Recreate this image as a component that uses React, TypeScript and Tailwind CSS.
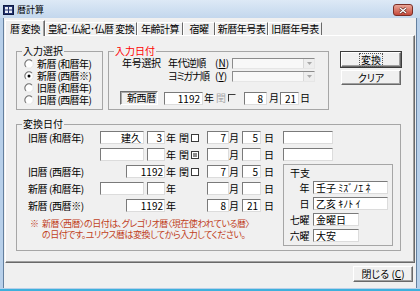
import React from "react";

type Props = { className?: string; children?: React.ReactNode };

function Field({ className = "", children }: Props) {
  return (
    <div
      className={`h-[13px] shrink-0 overflow-hidden whitespace-nowrap bg-white border border-t-[#7a7a7a] border-l-[#7a7a7a] border-r-[#dcdcdc] border-b-[#dcdcdc] leading-[11px] ${className}`}
    >
      {children}
    </div>
  );
}

function Ch({ className = "", children }: Props) {
  return <span className={`w-[10px] shrink-0 text-center leading-[12px] ${className}`}>{children}</span>;
}

function Check({ className = "", mixed = false }: { className?: string; mixed?: boolean }) {
  return (
    <div className={`w-[8px] h-[8px] shrink-0 border border-[#3a3a3a] bg-white p-[1px] ${className}`}>
      {mixed && <div className="w-full h-full bg-[#8c8c8c]" />}
    </div>
  );
}

function Radio({ on = false }: { on?: boolean }) {
  return (
    <svg width="10" height="10" viewBox="0 0 12 12" className="shrink-0">
      <circle cx="6" cy="6" r="5" fill="#fff" />
      <path d="M2.46 9.54A5 5 0 0 1 9.54 2.46" fill="none" stroke="#707070" strokeWidth="1.3" />
      <path d="M9.54 2.46A5 5 0 0 1 2.46 9.54" fill="none" stroke="#e2e2e2" strokeWidth="1" />
      {on && <circle cx="6" cy="6" r="1.8" fill="#000" />}
    </svg>
  );
}

function Combo() {
  return (
    <div className="w-[83px] h-[11px] shrink-0 flex border border-t-[#8c8c8c] border-l-[#8c8c8c] border-r-[#e6e6e6] border-b-[#e6e6e6] bg-[#f8f8f8]">
      <div className="ml-auto w-[11px] h-full flex items-center justify-center bg-[#eeeeee] border-l border-l-[#d8d8d8]">
        <svg width="5" height="3" viewBox="0 0 5 3">
          <path d="M0 0h5L2.5 3z" fill="#a8a8a8" />
        </svg>
      </div>
    </div>
  );
}

function Btn({ className = "", children, def = false }: Props & { def?: boolean }) {
  return (
    <div
      className={`flex items-center justify-center bg-[#f0f0f0] border border-t-white border-l-white border-r-[#696969] border-b-[#696969] leading-[12px] ${
        def ? "shadow-[0_0_0_1px_#3c3c3c,inset_-1px_-1px_0_#a0a0a0]" : "shadow-[inset_-1px_-1px_0_#a0a0a0]"
      } ${className}`}
    >
      {children}
    </div>
  );
}

type RowProps = {
  label?: string;
  kind: "wa" | "sei";
  a?: string;
  b?: string;
  y?: string;
  leap: "none" | "box" | "mixed";
  m?: string;
  d?: string;
};

function ConvRow({ label = "", kind, a = "", b = "", y = "", leap, m = "", d = "" }: RowProps) {
  return (
    <div className="flex items-center h-[13px]">
      <span className="ml-[11px] w-[72px] shrink-0 whitespace-nowrap leading-[12px] tracking-[-0.4px]">{label}</span>
      {kind === "wa" ? (
        <>
          <Field className="w-[44px] text-right pr-[2px]">{a}</Field>
          <Field className="ml-[3px] w-[18px] text-right pr-[2px]">{b}</Field>
        </>
      ) : (
        <Field className="ml-[26px] w-[39px] text-right pr-[1px]">{y}</Field>
      )}
      <Ch className="ml-[1px]">年</Ch>
      {leap === "none" ? (
        <Field className="ml-[31px] w-[22px] text-right pr-[2px]">{m}</Field>
      ) : (
        <>
          <Ch className="ml-[3px]">閏</Ch>
          <Check className="ml-[2px]" mixed={leap === "mixed"} />
          <Field className="ml-[8px] w-[22px] text-right pr-[2px]">{m}</Field>
        </>
      )}
      <Ch>月</Ch>
      <Field className="ml-[3px] w-[19px] text-right pr-[2px]">{d}</Field>
      <Ch className="ml-[3px]">日</Ch>
    </div>
  );
}

export default function App() {
  return (
    <div className="w-[420px] h-[291px] flex flex-col bg-[#b8d0ea] border-b-2 border-b-[#3fb0dc] overflow-hidden text-[10px] leading-[12px] text-black [font-family:'Noto_Sans_CJK_JP',sans-serif] [font-feature-settings:'palt']">
      {/* title bar */}
      <div className="h-[18px] shrink-0 flex items-center pt-[2px] bg-linear-to-b from-[#dde9f6] to-[#c3d7ed]">
        <svg width="11" height="10" viewBox="0 0 11 10" className="ml-[3px] shrink-0">
          <rect x="0.5" y="0.5" width="10" height="9" fill="#22336e" stroke="#0e1a44" />
          <rect x="2" y="2" width="3" height="6" fill="#e8ecf6" />
          <rect x="6" y="2" width="3" height="6" fill="#e8ecf6" />
          <path d="M2 5h7" stroke="#22336e" />
        </svg>
        <span className="ml-[3px] text-[9px]">暦計算</span>
        <div className="ml-auto mr-[7px] w-[20px] h-[12px] flex items-center justify-center rounded-[3px] border border-[#7a2e26] bg-linear-to-b from-[#e9a597] to-[#c4473a]">
          <svg width="8" height="7" viewBox="0 0 8 7">
            <path d="M1 1l6 5M7 1L1 6" stroke="#4a1a14" strokeWidth="2.4" />
            <path d="M1 1l6 5M7 1L1 6" stroke="#fff" strokeWidth="1.4" />
          </svg>
        </div>
      </div>

      {/* client area */}
      <div className="mx-[3px] h-[270px] shrink-0 flex flex-col bg-[#f0f0f0] border-x border-x-[#64809f]">
        {/* tabs */}
        <div className="h-[17px] shrink-0 flex items-end pl-[1px] whitespace-nowrap tracking-[-0.5px]">
          <div className="relative z-10 -mb-px h-[16px] w-[40px] flex items-center justify-center bg-[#f0f0f0] border-t border-l border-r border-t-white border-l-white border-r-[#696969] shadow-[inset_-1px_0_0_#a0a0a0]">
            暦 変換
          </div>
          <div className="h-[13px] w-[92px] flex items-center justify-center border-l border-r border-t border-t-white border-l-white border-r-[#696969]">
            皇紀･仏紀･仏暦 変換
          </div>
          <div className="h-[13px] w-[46px] flex items-center justify-center border-l border-r border-t border-t-white border-l-white border-r-[#696969]">
            年齢計算
          </div>
          <div className="h-[13px] w-[32px] flex items-center justify-center border-l border-r border-t border-t-white border-l-white border-r-[#696969]">
            宿曜
          </div>
          <div className="h-[13px] w-[53px] flex items-center justify-center border-l border-r border-t border-t-white border-l-white border-r-[#696969]">
            新暦年号表
          </div>
          <div className="h-[13px] w-[54px] flex items-center justify-center border-l border-r border-t border-t-white border-l-white border-r-[#696969]">
            旧暦年号表
          </div>
        </div>

        {/* tab page */}
        <div className="mx-[1px] h-[228px] shrink-0 bg-[#f0f0f0] border border-t-white border-l-white border-r-[#696969] border-b-[#696969] shadow-[inset_-1px_-1px_0_#a0a0a0]">
          <div className="mt-[9px] flex items-start">
            <fieldset className="ml-[10px] w-[87px] h-[65px] shrink-0 border border-[#a6a6a6]">
              <legend className="ml-[5px] px-[1px] leading-[12px]">入力選択</legend>
              <div className="pt-[1px] flex flex-col">
                {[
                  ["新暦 (和暦年)", false],
                  ["新暦 (西暦※)", true],
                  ["旧暦 (和暦年)", false],
                  ["旧暦 (西暦年)", false],
                ].map(([t, on]) => (
                  <div key={t as string} className="h-[12px] flex items-center">
                    <span className="ml-[7px] flex">
                      <Radio on={on as boolean} />
                    </span>
                    <span className="ml-[3px] whitespace-nowrap tracking-[-0.6px]">{t as string}</span>
                  </div>
                ))}
              </div>
            </fieldset>

            <fieldset className="ml-[5px] w-[221px] h-[65px] shrink-0 border border-[#a6a6a6]">
              <legend className="ml-[5px] px-[1px] leading-[12px] text-[#f00]">入力日付</legend>
              <div className="flex flex-col whitespace-nowrap">
                <div className="h-[12px] flex items-center">
                  <span className="ml-[13px] w-[46px] shrink-0 tracking-[-0.3px]">年号選択</span>
                  <span className="w-[47px] shrink-0 tracking-[-0.6px]">年代逆順</span>
                  <span className="w-[17px] shrink-0">
                    (<u>N</u>)
                  </span>
                  <Combo />
                </div>
                <div className="mt-[1px] h-[12px] flex items-center">
                  <span className="ml-[59px] w-[47px] shrink-0 tracking-[-1.2px]">ヨミガナ順</span>
                  <span className="w-[17px] shrink-0">
                    (<u>Y</u>)
                  </span>
                  <Combo />
                </div>
                <div className="mt-[9px] h-[14px] flex items-center">
                  <div className="ml-[11px] w-[38px] h-[14px] shrink-0 flex items-center justify-end pr-[1px] border border-t-[#6e6e6e] border-l-[#6e6e6e] border-r-white border-b-white shadow-[inset_1px_1px_0_#a8a8a8] tracking-[-0.3px]">
                    新西暦
                  </div>
                  <Field className="ml-[6px] w-[39px] text-right pr-[2px]">1192</Field>
                  <Ch className="ml-[1px]">年</Ch>
                  <Ch className="ml-[2px] text-[#a8a8a8]">閏</Ch>
                  <div className="ml-[2px] w-[8px] h-[8px] shrink-0 border border-t-[#3c3c3c] border-l-[#3c3c3c] border-r-[#f0f0f0] border-b-[#f0f0f0]" />
                  <Field className="ml-[8px] w-[23px] text-right pr-[3px]">8</Field>
                  <Ch className="ml-[2px]">月</Ch>
                  <Field className="ml-[1px] w-[19px] text-right pr-[2px]">21</Field>
                  <Ch className="ml-[1px]">日</Ch>
                </div>
              </div>
            </fieldset>

            <div className="ml-[12px] w-[60px] pt-[7px] flex flex-col">
              <Btn def className="h-[15px]">
                <span className="px-[1px] outline-1 outline-dotted outline-[#555]">変換</span>
              </Btn>
              <Btn className="mt-[3px] h-[15px]">クリア</Btn>
            </div>
          </div>

          <fieldset className="mt-[8px] ml-[10px] w-[385px] h-[133px] border border-[#a6a6a6]">
            <legend className="ml-[5px] px-[1px] leading-[12px]">変換日付</legend>
            <div className="flex items-start">
              <div className="w-[265px] shrink-0 pt-[1px] flex flex-col">
                <div className="flex flex-col gap-[4px]">
                  <ConvRow label="旧暦 (和暦年)" kind="wa" a="建久" b="3" leap="box" m="7" d="5" />
                  <ConvRow kind="wa" leap="mixed" />
                  <ConvRow label="旧暦 (西暦年)" kind="sei" y="1192" leap="box" m="7" d="5" />
                  <ConvRow label="新暦 (和暦年)" kind="wa" leap="none" />
                  <ConvRow label="新暦 (西暦※)" kind="sei" y="1192" leap="none" m="8" d="21" />
                </div>
                <div className="mt-[6px] flex text-[#c0401c] text-[9px] leading-[11px] tracking-[-0.5px] whitespace-nowrap">
                  <span className="ml-[13px] w-[12px] shrink-0">※</span>
                  <div>
                    新暦〈西暦〉の日付は、グレゴリオ暦〈現在使われている暦〉
                    <br />
                    の日付です。ユリウス暦は変換してから入力してください。
                  </div>
                </div>
              </div>

              <div className="ml-[1px] w-[110px] shrink-0 pt-[1px] flex flex-col">
                <Field className="w-[50px]" />
                <Field className="mt-[4px] w-[50px]" />
                <div className="mt-[3px] h-[82px] border border-[#a6a6a6] flex flex-col whitespace-nowrap">
                  <span className="ml-[6px] mt-[2px] h-[12px]">干支</span>
                  {[
                    ["年", "壬子 ﾐｽﾞﾉｴ ﾈ", "w-[75px]"],
                    ["日", "乙亥 ｷﾉﾄ ｲ", "w-[75px]"],
                    ["七曜", "金曜日", "w-[46px]"],
                    ["六曜", "大安", "w-[46px]"],
                  ].map(([k, v, w], i) => (
                    <div key={k} className={`h-[13px] flex items-center ${i === 0 ? "mt-[2px]" : "mt-[3px]"}`}>
                      <span className="w-[25px] shrink-0 text-right tracking-[-0.4px]">{k}</span>
                      <Field className={`ml-[4px] pl-[2px] ${w}`}>{v}</Field>
                    </div>
                  ))}
                </div>
              </div>
            </div>
          </fieldset>
        </div>

        {/* footer */}
        <div className="h-[25px] shrink-0 flex justify-end items-start pt-[3px] pr-[3px]">
          <Btn className="w-[60px] h-[16px]">
            閉じる (<u>C</u>)
          </Btn>
        </div>
      </div>
    </div>
  );
}
